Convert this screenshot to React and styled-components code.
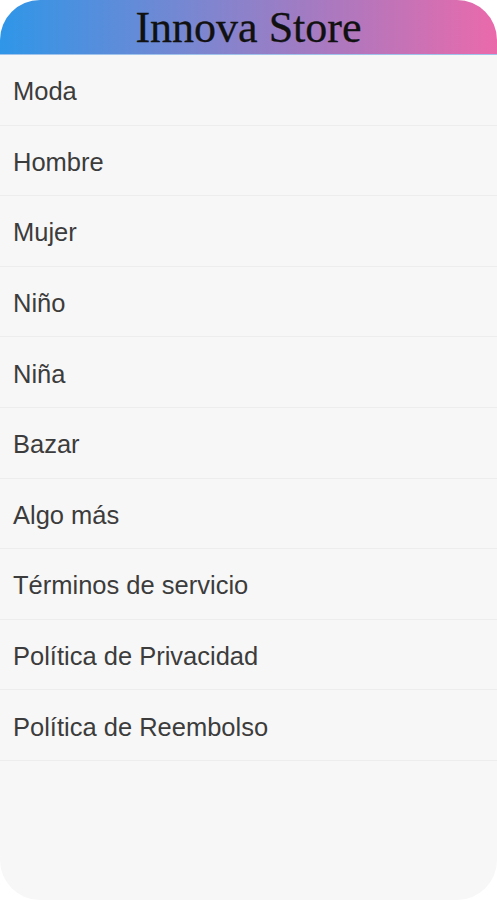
import React from 'react'
import styled, { createGlobalStyle } from 'styled-components'

const Global = createGlobalStyle`
  html, body {
    margin: 0;
    padding: 0;
    background: #ffffff;
  }
`;
const Screen = styled.div`
  width: 497px;
  height: 900px;
  display: flex;
  flex-direction: column;
  background-color: #f7f7f7;
  border-radius: 40px;
  overflow: hidden;
`;
const Header = styled.header`
  height: 55px;
  flex-shrink: 0;
  display: flex;
  align-items: center;
  justify-content: center;
  background: linear-gradient(90deg, #2f96e8 0%, #7c86d0 40%, #b177bd 70%, #ea6aab 100%);
  border-bottom: 1px solid #9fc3ea;
  box-sizing: border-box;
`;
const Title = styled.h1`
  margin: 0;
  font-family: 'Liberation Serif', 'Times New Roman', serif;
  font-weight: normal;
  font-size: 44px;
  line-height: 1;
  color: #111;
  -webkit-text-stroke: 0.3px #111;
  padding-top: 2px;
`;
const Menu = styled.ul`
  list-style: none;
  margin: 0;
  padding: 0;
  display: flex;
  flex-direction: column;
`;
const Item = styled.li`
  height: 70.6px;
  box-sizing: border-box;
  display: flex;
  align-items: center;
  padding: 4px 0 0 13px;
  border-bottom: 1px solid #ededed;
  font-family: 'Liberation Sans', Arial, sans-serif;
  font-size: 25.5px;
  color: #3c3c3c;
`;

const items = [
  'Moda',
  'Hombre',
  'Mujer',
  'Niño',
  'Niña',
  'Bazar',
  'Algo más',
  'Términos de servicio',
  'Política de Privacidad',
  'Política de Reembolso',
];

const App = () => {
  return (
    <>
      <Global />
      <Screen>
        <Header>
          <Title>Innova Store</Title>
        </Header>
        <Menu>
          {items.map((label) => (
            <Item key={label}>{label}</Item>
          ))}
        </Menu>
      </Screen>
    </>
  )
}

export default App
